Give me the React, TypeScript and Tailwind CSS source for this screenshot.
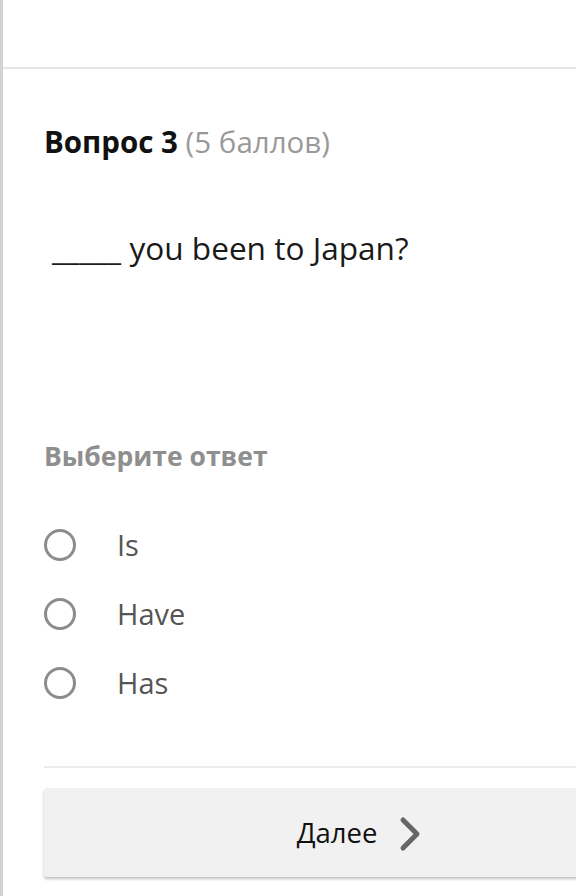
const options = ['Is', 'Have', 'Has'];

export default function App() {
  return (
    <div
      className="w-[576px] h-[896px] overflow-hidden bg-white border-l-[3px] border-[#d2d2d2]"
      style={{ fontFamily: '"Open Sans", sans-serif' }}
    >
      <div className="h-[67px]" />
      <div className="h-[2px] bg-[#e6e6e6]" />

      <div className="w-[680px] pl-[41px]">
        <h2 className="mt-[55px] text-[29.5px] leading-[36px] text-[#111] font-bold">
          Вопрос 3 <span className="font-normal text-[#999]">(5 баллов)</span>
        </h2>

        <p className="mt-[70px] pl-[8px] text-[31.6px] leading-[36px] text-[#1a1a1a]">
          _____ you been to Japan?
        </p>

        <div className="mt-[174px] text-[26.5px] leading-[32px] font-bold text-[#8f8f8f]">
          Выберите ответ
        </div>

        <div className="mt-[57px] flex flex-col gap-[37px]">
          {options.map((o) => (
            <label key={o} className="flex items-center h-[32px]">
              <span className="w-[32px] h-[32px] rounded-full border-[3px] border-[#8c8c8c]" />
              <span className="ml-[41px] text-[29px] leading-[36px] text-[#555]">{o}</span>
            </label>
          ))}
        </div>

        <div className="mt-[67px] h-[2px] bg-[#ececec]" />

        <button className="mt-[20px] w-[630px] h-[89px] rounded-[3px] bg-[#f1f1f1] shadow-[0_2px_3px_rgba(0,0,0,0.25)] flex items-center justify-center">
          <span className="text-[27.5px] text-[#111]">Далее</span>
          <svg className="ml-[22px] mt-[2px]" width="22" height="36" viewBox="0 0 22 36" fill="none">
            <polyline
              points="4,4 18,18 4,32"
              stroke="#666"
              strokeWidth="5"
              strokeLinecap="round"
              strokeLinejoin="round"
            />
          </svg>
        </button>
      </div>
    </div>
  );
}
